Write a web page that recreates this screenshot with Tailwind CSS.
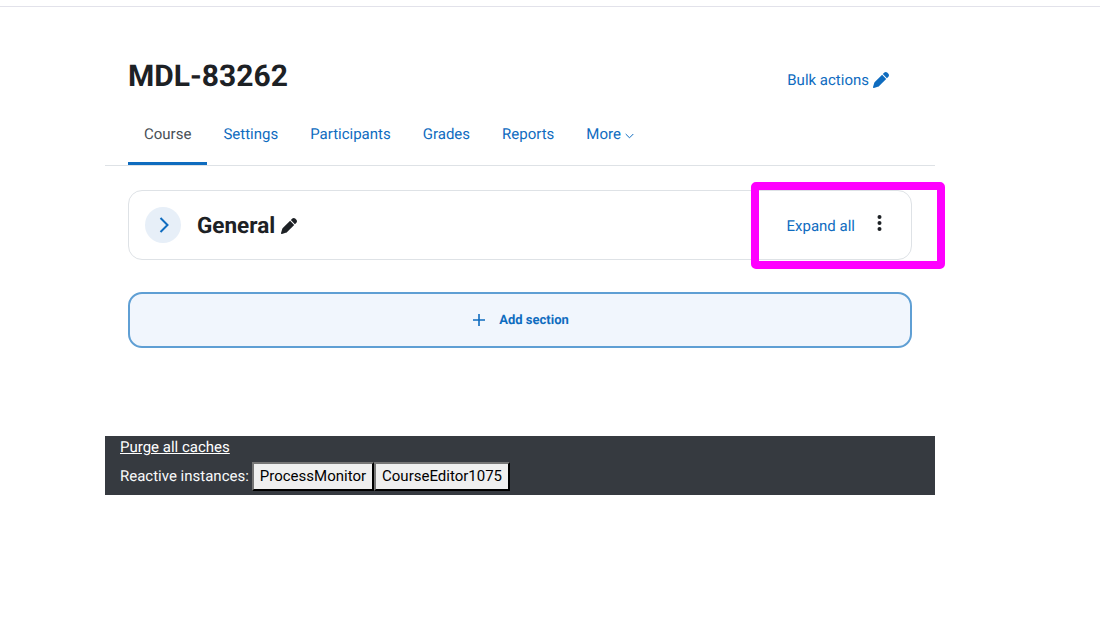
<!DOCTYPE html>
<html lang="en">
<head>
  <meta charset="UTF-8">
  <title>MDL-83262</title>
  <script src="https://cdn.jsdelivr.net/npm/@tailwindcss/browser@4"></script>
</head>
<body class="bg-white min-h-screen relative font-['Roboto',sans-serif] [text-rendering:geometricPrecision] text-[15px] text-[#1d2125]">
  <div class="h-[7px] border-b border-[#e2e2ea]"></div>

  <main class="ml-[105px] w-[830px]">
    <!-- header -->
    <div class="flex justify-between px-[23px] pt-[50px] h-[97px]">
      <h1 class="text-[30px] leading-[38px] pt-[1px] font-bold">MDL-83262</h1>
      <a class="flex items-center gap-[4px] h-[46px] mr-[23px] text-[#0f6cbf]">
        Bulk actions
        <svg class="w-4 h-4" viewBox="0 0 512 512" fill="currentColor"><path d="M362.7 19.3L314.3 67.7 444.3 197.7l48.4-48.4c25-25 25-65.5 0-90.5L453.3 19.3c-25-25-65.5-25-90.5 0zM291.7 90.3L58.6 323.5c-10.4 10.4-18 23.3-22.2 37.4L1 481.2c-2.5 8.5-.2 17.6 6 23.8s15.3 8.5 23.7 6.1l120.3-35.4c14.1-4.2 27-11.8 37.4-22.2L421.7 220.3 291.7 90.3z"/></svg>
      </a>
    </div>

    <!-- tabs -->
    <nav class="flex h-[62px] px-[23px] border-b border-[#dee2e6]">
      <a class="relative flex items-center h-[61px] px-4 text-[#495057]">Course<span class="absolute left-0 right-0 bottom-0 h-[3px] bg-[#0f6cbf]"></span></a>
      <a class="flex items-center h-[61px] px-4 text-[#0f6cbf]">Settings</a>
      <a class="flex items-center h-[61px] px-4 text-[#0f6cbf]">Participants</a>
      <a class="flex items-center h-[61px] px-4 text-[#0f6cbf]">Grades</a>
      <a class="flex items-center h-[61px] px-4 text-[#0f6cbf]">Reports</a>
      <a class="flex items-center gap-[4px] h-[61px] px-4 text-[#0f6cbf]">
        More
        <svg class="w-[9px] h-[6px] mt-[2px]" viewBox="0 0 9 6" fill="none" stroke="currentColor" stroke-width="1"><path d="M.7 1l3.8 3.8L8.3 1"/></svg>
      </a>
    </nav>

    <!-- general section -->
    <section class="mx-[23px] mt-[24px] h-[70px] flex items-center rounded-[14px] border border-[#dee2e6] pl-4 pr-[29px]">
      <span class="w-9 h-9 rounded-full bg-[#e7eff8] flex items-center justify-center text-[#0f6cbf]">
        <svg class="w-[10px] h-4 ml-[2px]" viewBox="0 0 10 16" fill="none" stroke="currentColor" stroke-width="2"><path d="M1.5 1l7 7-7 7"/></svg>
      </span>
      <h2 class="ml-4 text-[22.5px] leading-7 pt-[2px] font-bold">General</h2>
      <svg class="w-4 h-4 ml-[6px] mt-[2px]" viewBox="0 0 512 512" fill="currentColor"><path d="M362.7 19.3L314.3 67.7 444.3 197.7l48.4-48.4c25-25 25-65.5 0-90.5L453.3 19.3c-25-25-65.5-25-90.5 0zM291.7 90.3L58.6 323.5c-10.4 10.4-18 23.3-22.2 37.4L1 481.2c-2.5 8.5-.2 17.6 6 23.8s15.3 8.5 23.7 6.1l120.3-35.4c14.1-4.2 27-11.8 37.4-22.2L421.7 220.3 291.7 90.3z"/></svg>
      <a class="ml-auto pt-[2px] text-[#0f6cbf]">Expand all</a>
      <svg class="w-[5px] h-4 ml-[22px] mb-[4px]" viewBox="0 0 5 16" fill="#1d2125"><circle cx="2.5" cy="2" r="2"/><circle cx="2.5" cy="8" r="2"/><circle cx="2.5" cy="14" r="2"/></svg>
    </section>

    <!-- add section -->
    <a class="mx-[23px] mt-[32px] h-[56px] flex items-center justify-center gap-[14px] pl-[2px] rounded-[14px] border-2 border-[#5f9fd4] bg-[#f1f6fd] text-[#0f6cbf] text-[13px] font-bold">
      <svg class="w-3 h-3 mb-[1px]" viewBox="0 0 12 12" fill="none" stroke="currentColor" stroke-width="1.6"><path d="M6 0v12M0 6h12"/></svg>
      <span class="pt-[2px]">Add section</span>
    </a>

    <!-- footer -->
    <footer class="mt-[88px] h-[59px] bg-[#363a40] px-[15px] text-[#f8f9fa]">
      <a class="block pt-[1px] leading-[20px] underline text-white">Purge all caches</a>
      <div class="flex items-center mt-[5px]">
        <span>Reactive instances:</span>
        <button class="ml-[3px] h-[29px] px-[6px] bg-[#efefef] text-black border-2 border-t-[#767676] border-l-[#767676] border-r-black border-b-black">ProcessMonitor</button>
        <button class="h-[29px] px-[6px] bg-[#efefef] text-black border-2 border-t-[#767676] border-l-[#767676] border-r-black border-b-black">CourseEditor1075</button>
      </div>
    </footer>
  </main>

  <!-- highlight drawn over the screenshot -->
  <div class="absolute left-[751px] top-[182px] w-[194px] h-[87px] border-[8px] border-[#ff00ff] rounded-[5px]"></div>
</body>
</html>
